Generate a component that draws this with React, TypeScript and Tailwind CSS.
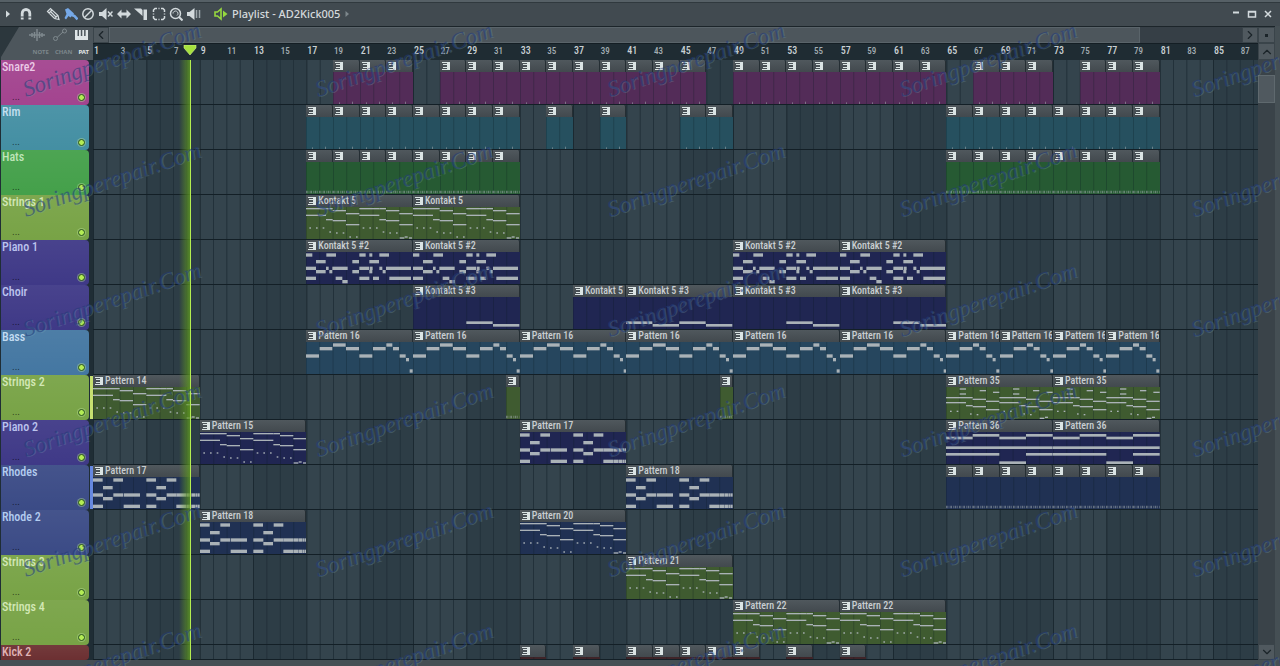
import type { ReactNode } from "react";
import { ChevronDown, ChevronLeft, ChevronRight, ChevronUp } from "lucide-react";

type Note = [x: number, y: number, w: number, h?: number];
type Clip = { bar: number; len: number; label?: string; notes?: Note[]; fill?: "ticks" | "dots" };
type Track = { name: string; panel: string; body: string; text: string; clips: Clip[]; focus?: string; short?: boolean };

const BARS = 87.375;
const pct = (bars: number) => `${(bars / BARS) * 100}%`;
const twice = (half: Note[]): Note[] => [...half, ...half.map(([x, y, w, h]): Note => [x + 160, y, w, h])];
const run = (from: number, to: number, fill?: Clip["fill"]): Clip[] => {
  const out: Clip[] = [];
  for (let bar = from; bar < to; bar += 2) out.push({ bar, len: 2, fill });
  return out;
};

const strings: Note[] = [
  ...twice([
    [0, 3, 60, 4], [60, 3, 20, 4], [80, 9, 40, 4], [120, 18, 40, 4],
    [0, 23, 60, 4], [60, 36, 20, 4], [80, 39, 40, 4], [120, 51, 40, 4],
    [10, 61, 5, 4], [30, 61, 5, 4], [50, 61, 5, 4], [70, 73, 5, 4], [90, 76, 5, 4], [110, 76, 5, 4],
  ]),
  [130, 88, 5, 4], [150, 88, 5, 4], [281, 91, 14, 4], [296, 88, 9, 4], [309, 91, 9, 4],
];
const piano: Note[] = [
  [0, 4, 19], [61, 4, 29], [160, 4, 19], [190, 4, 9], [220, 4, 29],
  [30, 24, 29], [139, 24, 20], [190, 24, 29],
  [0, 44, 30], [60, 44, 8], [79, 44, 46], [160, 44, 30], [192, 44, 8], [220, 44, 9], [240, 44, 75],
  [30, 54, 29], [70, 54, 9], [139, 54, 20], [190, 54, 9], [230, 54, 9],
  [0, 74, 30], [89, 74, 20], [160, 74, 30], [201, 74, 18], [250, 74, 65], [109, 84, 16],
];
const bass: Note[] = [
  [0, 37, 39], [41, 15, 38], [81, 4, 38], [120, 15, 39], [160, 37, 39], [201, 15, 38],
  [241, 4, 18], [261, 15, 18], [281, 37, 18], [300, 48, 9], [311, 82, 9],
];
const bassShort = bass.slice(4).map(([x, y, w]): Note => [x - 160, y, w]);
const chords: Note[] = [
  ...twice([[0, 4, 29], [61, 4, 29], [30, 27, 29], [0, 49, 30], [61, 49, 29], [30, 60, 29], [0, 83, 30]]),
  [92, 49, 49], [92, 83, 49], [250, 49, 31], [282, 49, 14], [297, 49, 9], [307, 49, 5], [313, 49, 7],
  [250, 83, 31], [282, 83, 14], [297, 83, 9], [307, 83, 5], [313, 83, 7],
];
const layered: Note[] = [
  ...twice([
    [41, 4, 19, 4], [41, 19, 19, 4], [101, 9, 19, 4], [141, 14, 19, 4],
    [0, 30, 80, 4], [80, 35, 40, 4], [120, 41, 40, 4], [0, 45, 60, 4], [60, 54, 20, 4], [80, 57, 40, 4],
    [120, 66, 40, 4], [12, 71, 5, 4], [32, 71, 5, 4], [72, 79, 5, 4], [92, 81, 5, 4],
  ]),
  [281, 92, 14, 4], [297, 89, 9, 4],
];
const pads: Note[] = [
  [0, 14, 80, 8], [80, 6, 80, 8], [160, 14, 80, 8], [240, 6, 80, 8], [0, 43, 320, 8],
  [0, 63, 160, 8], [240, 63, 80, 8], [160, 88, 80, 8],
];
const low: Note[] = [[160, 73, 79, 8], [240, 81, 79, 8]];
const lowFull: Note[] = [[0, 73, 79, 8], [80, 81, 79, 8], ...low];

const GREEN = { panel: "bg-[#78a346]", body: "bg-[#3f5b30]", text: "text-[#d3e8b6]" };
const VIOLET = { panel: "bg-[#3f3987]", body: "bg-[#202652]", text: "text-[#bcc4ee]" };
const BLUE = { panel: "bg-[#3b4b86]", body: "bg-[#203153]", text: "text-[#b4cdf0]" };

const tracks: Track[] = [
  { name: "Snare2", panel: "bg-[#a3448f]", body: "bg-[#532c58]", text: "text-[#eac9e6]", clips: [...run(19, 25, "ticks"), ...run(27, 47, "ticks"), ...run(49, 65, "ticks"), ...run(67, 73, "ticks"), ...run(75, 81, "ticks")] },
  { name: "Rim", panel: "bg-[#448fa3]", body: "bg-[#26505f]", text: "text-[#c3dff0]", clips: [...run(17, 33, "ticks"), ...run(35, 37, "ticks"), ...run(39, 41, "ticks"), ...run(45, 49, "ticks"), ...run(65, 81, "ticks")] },
  { name: "Hats", panel: "bg-[#44a04a]", body: "bg-[#265a33]", text: "text-[#bfe5b8]", clips: [...run(17, 33, "dots"), ...run(65, 81, "dots")] },
  { name: "Strings 1", ...GREEN, clips: [17, 25].map((bar) => ({ bar, len: 8, label: "Kontakt 5", notes: strings })) },
  { name: "Piano 1", ...VIOLET, clips: [17, 25, 49, 57].map((bar) => ({ bar, len: 8, label: "Kontakt 5 #2", notes: piano })) },
  {
    name: "Choir", ...VIOLET,
    clips: [
      { bar: 25, len: 8, label: "Kontakt 5 #3", notes: low },
      { bar: 37, len: 4, label: "Kontakt 5" },
      { bar: 41, len: 8, label: "Kontakt 5 #3", notes: lowFull },
      { bar: 49, len: 8, label: "Kontakt 5 #3", notes: low },
      { bar: 57, len: 8, label: "Kontakt 5 #3", notes: low },
    ],
  },
  {
    name: "Bass", panel: "bg-[#4477a2]", body: "bg-[#26465e]", text: "text-[#c3dcf2]",
    clips: [
      ...[17, 25, 33, 41, 49, 57].map((bar) => ({ bar, len: 8, label: "Pattern 16", notes: bass })),
      ...[65, 69, 73, 77].map((bar) => ({ bar, len: 4, label: "Pattern 16", notes: bassShort })),
    ],
  },
  {
    name: "Strings 2", ...GREEN, focus: "bg-[#c6e070]",
    clips: [
      { bar: 1, len: 8, label: "Pattern 14", notes: strings },
      { bar: 32, len: 1, fill: "dots" },
      { bar: 48, len: 1, fill: "dots" },
      { bar: 65, len: 8, label: "Pattern 35", notes: layered },
      { bar: 73, len: 8, label: "Pattern 35", notes: layered },
    ],
  },
  {
    name: "Piano 2", ...VIOLET,
    clips: [
      { bar: 9, len: 8, label: "Pattern 15", notes: strings },
      { bar: 33, len: 8, label: "Pattern 17", notes: chords },
      { bar: 65, len: 8, label: "Pattern 36", notes: pads },
      { bar: 73, len: 8, label: "Pattern 36", notes: pads },
    ],
  },
  {
    name: "Rhodes", ...BLUE, focus: "bg-[#6688e0]",
    clips: [
      { bar: 1, len: 8, label: "Pattern 17", notes: chords },
      { bar: 41, len: 8, label: "Pattern 18", notes: chords },
      ...run(65, 81, "dots"),
    ],
  },
  {
    name: "Rhode 2", ...BLUE,
    clips: [
      { bar: 9, len: 8, label: "Pattern 18", notes: chords },
      { bar: 33, len: 8, label: "Pattern 20", notes: strings },
    ],
  },
  { name: "Strings 3", ...GREEN, clips: [{ bar: 41, len: 8, label: "Pattern 21", notes: strings }] },
  { name: "Strings 4", ...GREEN, clips: [49, 57].map((bar) => ({ bar, len: 8, label: "Pattern 22", notes: strings })) },
  { name: "Kick 2", panel: "bg-[#6c3032]", body: "bg-[#3f2428]", text: "text-[#e0b4b6]", short: true, clips: [33, 37, 41, 43, 45, 47, 49, 53, 57].map((bar) => ({ bar, len: 2 })) },
];

function ClipIcon() {
  return (
    <svg viewBox="0 0 8 8" className="size-2 shrink-0" fill="#dbe4e4" aria-hidden="true">
      <path d="M0 0h8v8H0V7h5V6H1V5h4V3H1V2h4V1H0z" />
    </svg>
  );
}

function ClipBody({ clip }: { clip: Clip }) {
  const w = clip.len * 40;
  return (
    <svg viewBox={`0 0 ${w} 96`} preserveAspectRatio="none" className="absolute inset-0 h-full w-full" aria-hidden="true">
      {Array.from({ length: clip.len }, (_, i) => (
        <rect key={i} x={i * 40} y="0" width="2.5" height="96" fill="#0b1a22" opacity=".3" />
      ))}
      {clip.notes?.map(([x, y, nw, h = 10], i) => <rect key={i} x={x} y={y} width={nw} height={h} fill="#aab2b7" />)}
      {clip.fill === "ticks" && (
        <g fill="#aab2b7" opacity=".5">
          <rect x="18" y="91" width="3" height="5" />
          <rect x="57" y="89" width="3" height="7" />
        </g>
      )}
      {clip.fill === "dots" && (
        <path d={`M0 90H${w}`} stroke="#aab2b7" strokeWidth="7" strokeDasharray="5 3 2 3" opacity=".5" />
      )}
    </svg>
  );
}

function ClipView({ clip, body }: { clip: Clip; body: string }) {
  return (
    <div className="row-start-1 flex min-w-0 flex-col" style={{ gridColumn: `${clip.bar} / span ${clip.len}` }}>
      <div className="flex h-3 items-center gap-0.5 overflow-hidden rounded-tr-xs border-r border-[#252e33] bg-linear-to-b from-[#50585d] to-[#42494e] pl-0.5 text-[10px] leading-3 font-medium whitespace-nowrap text-[#c9ced1]">
        <ClipIcon />
        {clip.label}
      </div>
      <div className={`relative min-h-0 flex-1 ${body}`}>
        <ClipBody clip={clip} />
      </div>
    </div>
  );
}

function TrackRow({ track }: { track: Track }) {
  return (
    <div className={`flex ${track.short ? "h-[15px]" : "h-[45px]"}`}>
      <div className="flex w-[93px] shrink-0 bg-[#1f2d35] pl-px">
        <div className={`flex w-[88px] flex-col justify-between rounded-r-[4px] bg-linear-to-b from-white/5 to-transparent pr-1 pl-px ${track.panel}`}>
          <span className={`text-[12px] leading-[14px] font-medium ${track.text}`}>{track.name}</span>
          {!track.short && (
            <div className="flex items-center justify-between pb-1 pl-2.5">
              <span className="text-[10px] leading-2 text-black/60" aria-hidden="true">...</span>
              <button
                aria-label={`Mute ${track.name}`}
                className="size-[7px] rounded-full border border-[#25501c] bg-[#b4ec55] ring-1 ring-[#c4e8a0]/40"
              />
            </div>
          )}
        </div>
        <div className={`my-px ml-px w-[3px] ${track.focus ?? ""}`} />
      </div>
      <div
        className="grid flex-1 border-b border-[#131f26]"
        style={{ gridTemplateColumns: `repeat(87, minmax(0, 1fr)) ${BARS - 87}fr` }}
      >
        {track.clips.map((clip) => (
          <ClipView key={clip.bar} clip={clip} body={track.body} />
        ))}
      </div>
    </div>
  );
}

type ToolProps = { label: string; children: ReactNode; color?: string; className?: string };

function Tool({ label, children, color = "text-[#d3dadd]", className = "" }: ToolProps) {
  return (
    <button aria-label={label} className={`flex size-4 items-center justify-center ${color} ${className}`}>
      <svg viewBox="0 0 14 14" className="size-[14px]" fill="none" stroke="currentColor" strokeWidth="1.5">
        {children}
      </svg>
    </button>
  );
}

function Toolbar() {
  return (
    <header className="flex h-[26px] items-center border-t-2 border-[#566066] bg-[#414a50] pr-1 shadow-[inset_0_1px_0_#30393e]">
      <Tool label="Playlist options">
        <path d="M5 3.500v7L9 7z" fill="currentColor" stroke="none" />
      </Tool>
      <Tool label="Snap" className="ml-0.5">
        <path d="M3.200 12.500V6.300a3.800 3.800 0 0 1 7.600 0v6.200" strokeWidth="2.800" />
        <path d="M1.500 10h3.500M9 10h3.500" stroke="#414a50" strokeWidth="1" />
      </Tool>
      <div className="ml-[11px] flex w-[157px] justify-between">
        <Tool label="Draw">
          <path d="M1.500 4.500 4.500 1.500 12 8.500l1 4-4.500-1zM3 6l3-3M4 4l6.500 6.500M9 11l2.500-2.500" strokeWidth="1.200" />
        </Tool>
        <Tool label="Paint" color="text-[#76a9e8]">
          <path d="M1 2.500 4 1l6 5.500-3.500 4L4.500 9 2 12.500.5 11l2-4z" fill="currentColor" stroke="none" />
          <path d="M8 8l2.500 1 3 3.500" strokeWidth="2.600" />
        </Tool>
        <Tool label="Delete">
          <circle cx="7" cy="7" r="5.200" />
          <path d="M3.500 10.500l7-7" />
        </Tool>
        <Tool label="Mute">
          <path d="M0 5h3l4.500-4v12L3 9H0z" fill="currentColor" stroke="none" />
          <path d="M9 4.500l4.500 5M13.500 4.500L9 9.500" />
        </Tool>
        <Tool label="Slip">
          <path d="M0 7l4.500-4.500v3h5v-3L14 7l-4.500 4.500v-3h-5v3z" fill="currentColor" stroke="none" />
        </Tool>
        <Tool label="Slice">
          <path d="M0 1.500h7l1.500 1.500V9zM9.500 2.500H13V13H9.500z" fill="currentColor" stroke="none" />
        </Tool>
        <Tool label="Select">
          <path d="M1.500 5V3l1.500-1.500h2M9 1.500h2L12.500 3v2M12.500 9v2L11 12.500H9M5 12.500H3L1.500 11V9M6.500 1.500h1M1.500 6.500v1M12.500 6.500v1M6.500 12.500h1" />
        </Tool>
        <Tool label="Zoom">
          <circle cx="6.500" cy="6.500" r="5" />
          <path d="M10 10l3.500 3.500" strokeWidth="2" />
          <path d="M4 6.500a2.500 2.500 0 1 1 4 2" strokeWidth="1" />
        </Tool>
        <Tool label="Playback">
          <path d="M0 5h2.500L7.500 1v12L2.500 9H0z" fill="currentColor" stroke="none" />
          <path d="M9.500 3v8M12.500 3v8" stroke="#9da6aa" />
        </Tool>
      </div>
      <Tool label="Play mode" color="text-[#96d83f]" className="ml-[11px]">
        <path d="M1 5h2.500l3.500-3v10L3.500 9H1z" strokeWidth="1.600" />
        <path d="M9 3.500v7L13.500 7z" fill="currentColor" stroke="none" />
      </Tool>
      <h1 className="ml-[3px] font-['Noto_Sans',sans-serif] text-[11px] leading-4 font-medium text-[#d6dadd]">Playlist - AD2Kick005</h1>
      <Tool label="Choose pattern" color="text-[#7d878c]">
        <path d="M4.500 4v6L8 7z" fill="currentColor" stroke="none" />
      </Tool>
      <div className="ml-auto flex">
        <Tool label="Minimize"><path d="M4 5.500h6" strokeWidth="2" /></Tool>
        <Tool label="Maximize"><path d="M3.500 4.500h7v5.500h-7zM3.500 5h7" /></Tool>
        <Tool label="Close"><path d="M4 4l6 6M10 4l-6 6" /></Tool>
      </div>
    </header>
  );
}

function PickerPanel() {
  return (
    <div className="w-[93px] shrink-0 bg-[#2c373d] pl-px">
      <div className="flex h-[33px] flex-col justify-between bg-[#4d565c] pt-px pr-1 pb-1 [clip-path:polygon(18px_0,100%_0,100%_100%,0_100%,0_30px)]">
        <div className="flex justify-end gap-2">
          <svg viewBox="0 0 16 14" className="h-3.5 w-4" stroke="#7f898e" strokeWidth="1.500" fill="none" aria-hidden="true">
            <path d="M0 7h16M3 5v4M5.500 4v6M8 1v12M10.500 4v6M13 5v4" />
          </svg>
          <svg viewBox="0 0 14 14" className="size-3.5" stroke="#7f898e" fill="none" aria-hidden="true">
            <circle cx="2.500" cy="10.500" r="2" /><circle cx="11.500" cy="3" r="2" /><path d="M4 9.500L10 4" />
          </svg>
          <svg viewBox="0 0 14 14" className="size-3.5" fill="#dfe5e7" aria-hidden="true">
            <path d="M0 2h2.500v6H4V2h1.800v6h1.500V2h1.800v6h1.500V2H13v10H0z" />
          </svg>
        </div>
        <div className="flex justify-end gap-1.5 font-['Noto_Sans',sans-serif] text-[6px] leading-2 font-bold">
          <button className="text-[#7c868b]">NOTE</button>
          <button className="text-[#7c868b]">CHAN</button>
          <button className="text-[#e4e8ea]">PAT</button>
        </div>
      </div>
    </div>
  );
}

const scrollButton = "flex items-center justify-center border border-[#3a444a] bg-[#50595f] text-[#1b2429]";

function Timeline() {
  const bars = Array.from({ length: 44 }, (_, i) => i * 2 + 1);
  return (
    <div className="flex h-[34px] border-t border-[#1c252a]">
      <PickerPanel />
      <div className="flex min-w-0 flex-1 flex-col">
        <div className="flex h-4 bg-[#363f46]">
          <button aria-label="Scroll left" className={`w-4 ${scrollButton}`}><ChevronLeft className="size-3.5 shrink-0" /></button>
          <div className="flex-1"><div className="h-full w-[91%] border border-[#5a646a] bg-[#4d565c]" /></div>
          <button aria-label="Scroll right" className={`w-4 ${scrollButton}`}><ChevronRight className="size-3.5 shrink-0" /></button>
        </div>
        <div className="relative h-[17px] overflow-hidden border-t border-[#141e24] bg-[#1f2c33]">
          <div className="grid h-4 items-center leading-[14px]" style={{ gridTemplateColumns: `repeat(43, minmax(0, 2fr)) ${BARS - 86}fr` }}>
            {bars.map((bar) => (
              <span
                key={bar}
                className={`min-w-0 pb-0.5 pl-px font-medium ${bar % 4 === 1 ? "text-[10px] text-[#c9d0d3]" : "text-[9px] text-[#a3adb2]"}`}
              >
                {bar}
              </span>
            ))}
          </div>
          <svg viewBox="0 0 14 10" className="absolute top-px h-2.5 w-3.5 -translate-x-1/2" style={{ left: pct(7.3) }} aria-hidden="true">
            <path d="M1 0h12v3L7 10 1 3z" fill="#a6e23e" stroke="#d3f58b" strokeWidth=".6" />
          </svg>
        </div>
      </div>
      <div className="flex w-[17px] shrink-0 flex-col">
        <button aria-label="Scroll options" className={`h-4 ${scrollButton}`}><span className="size-[3px] bg-[#1b2429]" /></button>
        <button aria-label="Scroll up" className={`h-[17px] ${scrollButton}`}><ChevronUp className="size-3.5 shrink-0" /></button>
      </div>
    </div>
  );
}

function BarGrid() {
  return (
    <svg className="absolute inset-0 h-full w-full" preserveAspectRatio="none" viewBox={`0 0 ${BARS * 40} 600`} aria-hidden="true">
      {Array.from({ length: 88 }, (_, i) => (
        <g key={i}>
          <rect x={i * 40} width="40" height="600" fill={Math.floor(i / 4) % 2 ? "#2d3d46" : "#34444d"} />
          <rect x={i * 40} width="3" height="600" fill={i % 4 ? "#22313a" : "#1b2931"} />
        </g>
      ))}
    </svg>
  );
}

function Watermark() {
  const spots = [0, 1, 2, 3, 4].flatMap((c) => [0, 1, 2, 3, 4, 5].map((r) => [26 + c * 292, 97 + r * 120]));
  return (
    <svg className="pointer-events-none absolute inset-0 h-full w-full" aria-hidden="true">
      <g className="font-['Liberation_Serif',serif] text-[23px] italic">
        {spots.map(([x, y]) => (
          <g key={`${x}-${y}`} transform={`translate(${x} ${y}) rotate(-19)`}>
            <text x="1" y="1" fill="#7fa8b8" opacity=".25">Soringperepair.Com</text>
            <text fill="#233a78" opacity=".55">Soringperepair.Com</text>
          </g>
        ))}
      </g>
    </svg>
  );
}

export default function App() {
  return (
    <div className="relative min-h-screen overflow-hidden bg-[#454f54] font-['Liberation_Sans_Narrow','Roboto_Condensed',Roboto,sans-serif]">
      <Toolbar />
      <div className="mr-[5px]">
        <Timeline />
        <main className="flex">
          <div className="relative min-w-0 flex-1">
            <div className="absolute inset-y-0 right-0 left-[93px]"><BarGrid /></div>
            <div className="relative">
              {tracks.map((track) => <TrackRow key={track.name} track={track} />)}
            </div>
            <div className="pointer-events-none absolute inset-y-0 right-0 left-[93px]">
              <div
                className="absolute inset-y-0 w-3 -translate-x-full border-r border-[#b4ee50] bg-linear-to-r from-transparent to-[#5f9a1f]/80"
                style={{ left: pct(7.35) }}
              />
            </div>
          </div>
          <div className="flex w-[17px] shrink-0 flex-col bg-[#3a4349]">
            <div className="mt-[15px] h-7 border border-[#5f696e] bg-[#50595f]" />
            <button aria-label="Scroll down" className={`mt-auto h-4 ${scrollButton}`}><ChevronDown className="size-3.5 shrink-0" /></button>
          </div>
        </main>
      </div>
      <Watermark />
    </div>
  );
}
